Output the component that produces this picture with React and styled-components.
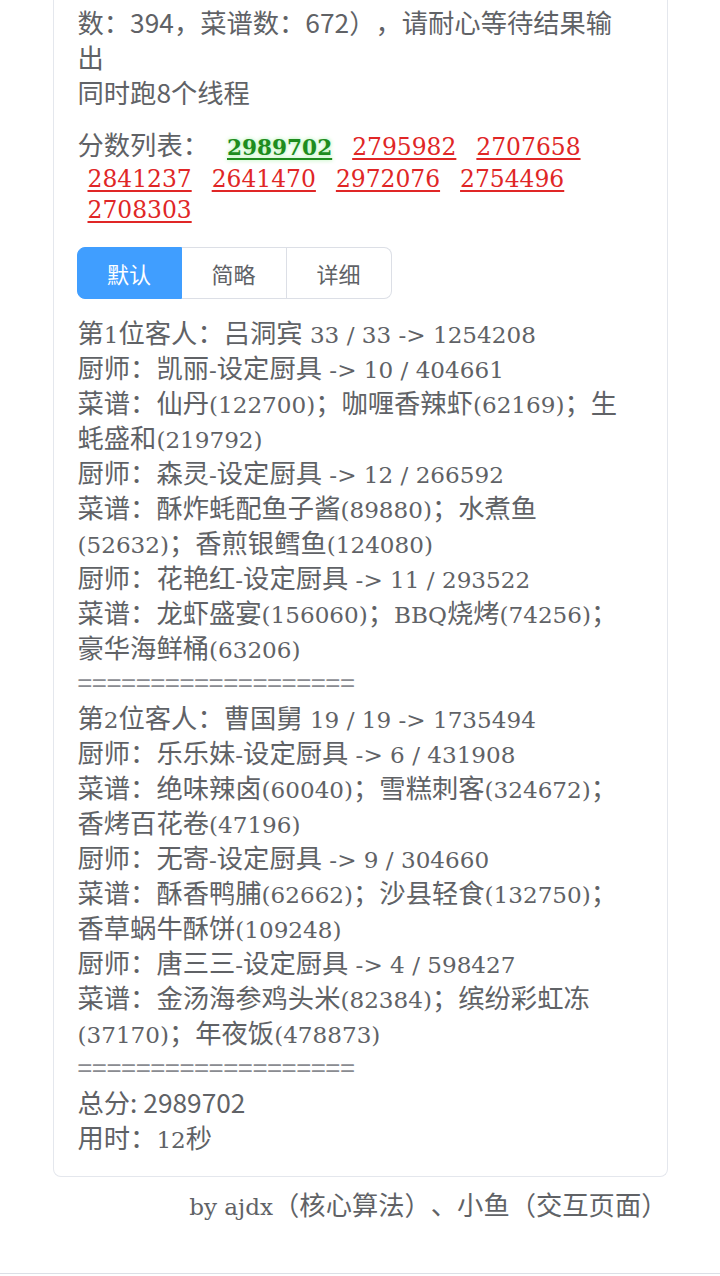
import React, { useState } from "react";
import styled, { createGlobalStyle } from "styled-components";

const GlobalStyle = createGlobalStyle`
  * { box-sizing: border-box; }
  body {
    margin: 0;
    background: #fff;
    color: #606266;
    font-family: "Noto Sans CJK SC", sans-serif;
    text-spacing-trim: space-all;
  }
`;

const scores = [
  { value: 2989702, best: true },
  { value: 2795982 },
  { value: 2707658 },
  { value: 2841237 },
  { value: 2641470 },
  { value: 2972076 },
  { value: 2754496 },
  { value: 2708303 },
];

const guests = [
  {
    title: "第1位客人：吕洞宾 33 / 33 -> 1254208",
    chefs: [
      { chef: "凯丽-设定厨具 -> 10 / 404661", recipes: "仙丹(122700)；咖喱香辣虾(62169)；生蚝盛和(219792)" },
      { chef: "森灵-设定厨具 -> 12 / 266592", recipes: "酥炸蚝配鱼子酱(89880)；水煮鱼(52632)；香煎银鳕鱼(124080)" },
      { chef: "花艳红-设定厨具 -> 11 / 293522", recipes: "龙虾盛宴(156060)；BBQ烧烤(74256)；豪华海鲜桶(63206)" },
    ],
  },
  {
    title: "第2位客人：曹国舅 19 / 19 -> 1735494",
    chefs: [
      { chef: "乐乐妹-设定厨具 -> 6 / 431908", recipes: "绝味辣卤(60040)；雪糕刺客(324672)；香烤百花卷(47196)" },
      { chef: "无寄-设定厨具 -> 9 / 304660", recipes: "酥香鸭脯(62662)；沙县轻食(132750)；香草蜗牛酥饼(109248)" },
      { chef: "唐三三-设定厨具 -> 4 / 598427", recipes: "金汤海参鸡头米(82384)；缤纷彩虹冻(37170)；年夜饭(478873)" },
    ],
  },
];

const modes = ["默认", "简略", "详细"];

// latin runs use a serif face at a smaller size, CJK stays sans
const Mixed = ({ text }) =>
  text.split(/([\x20-\x7e]+)/).map((part, i) =>
    /^[\x20-\x7e]+$/.test(part) ? <Latin key={i}>{part}</Latin> : part
  );

const App = () => {
  const [mode, setMode] = useState("默认");

  return (
    <>
      <GlobalStyle />
      <Page>
        <Card>
          <Notice>
            数：394，菜谱数：672），请耐心等待结果输出
            <br />
            同时跑8个线程
          </Notice>
          <ScoreList>
            <ScoreLabel>分数列表：</ScoreLabel>
            {scores.map((s) => (
              <ScoreLink key={s.value} $best={s.best}>
                {s.value}
              </ScoreLink>
            ))}
          </ScoreList>
          <ModeGroup>
            {modes.map((m) => (
              <ModeButton key={m} $active={mode === m} onClick={() => setMode(m)}>
                {m}
              </ModeButton>
            ))}
          </ModeGroup>
          <Result>
            {guests.map((g) => (
              <React.Fragment key={g.title}>
                <Line><Mixed text={g.title} /></Line>
                {g.chefs.map((c) => (
                  <React.Fragment key={c.chef}>
                    <Line><Mixed text={"厨师：" + c.chef} /></Line>
                    <Line><Mixed text={"菜谱：" + c.recipes} /></Line>
                  </React.Fragment>
                ))}
                <Separator>===================</Separator>
              </React.Fragment>
            ))}
            <Line>总分: 2989702</Line>
            <Line><Mixed text="用时：12秒" /></Line>
          </Result>
        </Card>
        <Footer>
          <Mixed text="by ajdx（核心算法）、小鱼（交互页面）" />
        </Footer>
        <BottomBar />
      </Page>
    </>
  );
};

const Page = styled.div`
  width: 615px;
  margin: 0 auto;
`;
const Card = styled.div`
  border: 1px solid #e4e7ed;
  border-top: none;
  border-radius: 0 0 8px 8px;
  padding: 4px 37px 22px 24px;
  font-size: 26.3px;
  line-height: 35px;
`;
const Latin = styled.span`
  font-family: "DejaVu Serif", serif;
  font-size: 23.1px;
  line-height: 16px;
`;
const Notice = styled.div``;
const ScoreList = styled.div`
  margin-top: 19px;
  line-height: 31.5px;
`;
const ScoreLabel = styled.span`
  margin-right: 8px;
`;
const ScoreLink = styled.a`
  display: inline-block;
  margin: 0 10px;
  line-height: 20px;
  font-family: "DejaVu Serif", serif;
  font-size: ${(p) => (p.$best ? "21.6px" : "23.4px")};
  color: ${(p) => (p.$best ? "#1e8c1e" : "#e02626")};
  font-weight: ${(p) => (p.$best ? 700 : 400)};
  text-decoration: underline;
  text-decoration-thickness: 2px;
  text-underline-offset: 3px;
  text-shadow: ${(p) => (p.$best ? "0 0 4px #9ff09f" : "none")};
  cursor: pointer;
`;
const ModeGroup = styled.div`
  display: flex;
  width: fit-content;
  margin: 24px 0 15px -1px;
`;
const ModeButton = styled.button`
  width: 105px;
  height: 52px;
  border: 1px solid ${(p) => (p.$active ? "#409eff" : "#dcdfe6")};
  border-left-width: 0;
  background: ${(p) => (p.$active ? "#409eff" : "#fff")};
  color: ${(p) => (p.$active ? "#fff" : "#606266")};
  font-family: "Noto Sans CJK SC", sans-serif;
  font-size: 22px;
  cursor: pointer;
  &:first-child {
    border-left-width: 1px;
    border-radius: 8px 0 0 8px;
  }
  &:last-child {
    border-radius: 0 8px 8px 0;
  }
`;
const Result = styled.div``;
const Line = styled.div``;
const Separator = styled.div`
  color: #8a8c91;
`;
const Footer = styled.div`
  margin-top: 9px;
  text-align: right;
  font-size: 26.3px;
  line-height: 35px;
`;
const BottomBar = styled.div`
  margin: 52px -53px 0;
  border-top: 1px solid #dcdfe6;
  height: 20px;
`;

export default App;
